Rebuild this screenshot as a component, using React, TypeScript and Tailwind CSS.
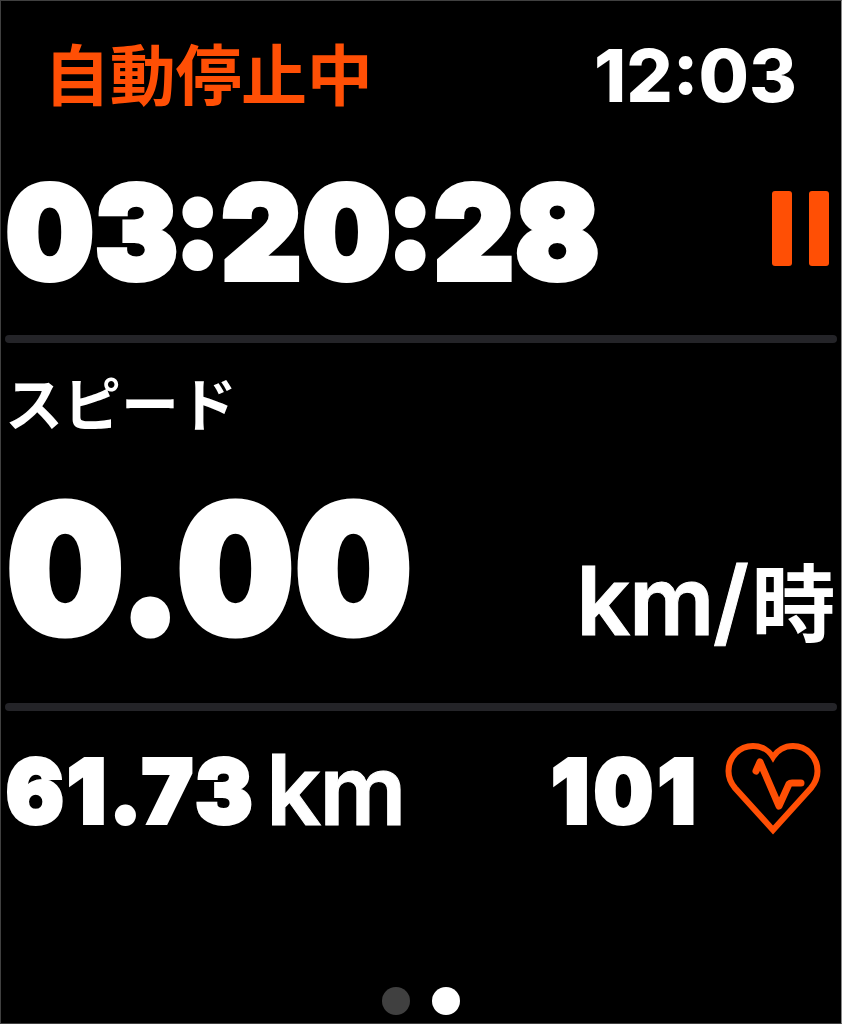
function StatusBar() {
  return (
    <div className="flex h-[149px] items-center justify-between pr-[44px] pl-[43px]">
      <span className="pt-px text-[66px] leading-none font-bold tracking-[-0.3px] text-[#ff4f05]">自動停止中</span>
      <span className="text-[73px] leading-none font-extrabold">12:03</span>
    </div>
  );
}

function PauseIcon() {
  return (
    <div className="mt-[41px] flex gap-[17px]">
      <div className="h-[75px] w-[20px] rounded-[3px] bg-[#ff4f05]" />
      <div className="h-[75px] w-[20px] rounded-[3px] bg-[#ff4f05]" />
    </div>
  );
}

function Divider() {
  return <div className="mx-[4px] h-[8px] shrink-0 rounded-full bg-[#242428]" />;
}

function Colon() {
  return <span className="mr-[-1px] ml-[-5px] inline-block -translate-y-[13px]">:</span>;
}

function HeartIcon() {
  return (
    <svg className="mb-[5px] shrink-0" width="96" height="94" viewBox="0 0 96 94" fill="none" stroke="#ff4f05" strokeLinecap="round" strokeLinejoin="round">
      <path d="M48 88 L10 46 C5 40 3.5 35 3.5 29 C3.5 15 14.5 4 28 4 C36.5 4 44 8.5 48 15 C52 8.5 59.5 4 68 4 C81.5 4 92.500 15 92.500 29 C92.500 35 91 40 86 46 Z" strokeWidth="6" strokeLinejoin="miter" />
      <path d="M31 29 L35 20 L54 64 L64 42 Q65 41 67 41 H76" strokeWidth="7" />
    </svg>
  );
}

export default function App() {
  return (
    <div className="flex h-[1024px] w-[842px] flex-col overflow-hidden border border-[#404040] border-r-[#8a8a8a] bg-black font-[Inter,'Noto_Sans_CJK_JP',sans-serif] text-white">
      <StatusBar />
      <div className="flex h-[185px] items-start justify-between pr-[12px] pl-[5px]">
        <span className="mt-[18px] origin-left scale-x-[0.955] text-[129px] leading-none font-black tracking-[1.8px] whitespace-nowrap [-webkit-text-stroke:6px_white]">
          03<Colon />20<Colon />28
        </span>
        <PauseIcon />
      </div>
      <Divider />
      <div className="h-[120px] pl-[4px] text-[58px] leading-[124px] font-bold">スピード</div>
      <div className="flex h-[240px] items-baseline justify-between pr-[7px] pl-[6px]">
        <span className="origin-left scale-x-[0.925] text-[177px] leading-[212px] font-black tracking-[1.8px] [-webkit-text-stroke:7px_white]">0.00</span>
        <span className="translate-y-[2px] text-[95px] leading-none font-semibold tracking-[-1.500px] [-webkit-text-stroke:1px_white]">
          km/<span className="ml-[4px] text-[84px] [-webkit-text-stroke:0px]">時</span>
        </span>
      </div>
      <Divider />
      <div className="flex h-[160px] items-center justify-between pr-[20px] pl-[5px]">
        <div className="-mt-[3px] flex items-baseline">
          <span className="w-[260px] origin-left -translate-y-[2px] scale-x-[0.97] text-[88px] leading-none font-black tracking-[3.800px] [-webkit-text-stroke:4px_white]">61.73</span>
          <span className="text-[97px] leading-none font-semibold tracking-[-2px] [-webkit-text-stroke:1px_white]">km</span>
        </div>
        <div className="flex items-center gap-[24px]">
          <span className="origin-right scale-x-[0.94] text-[88px] leading-none font-black tracking-[5.500px] [-webkit-text-stroke:4px_white]">101</span>
          <HeartIcon />
        </div>
      </div>
      <div className="mt-auto mb-[8px] flex justify-center gap-[22px]">
        <div className="size-[28px] rounded-full bg-[#404040]" />
        <div className="size-[28px] rounded-full bg-white" />
      </div>
    </div>
  );
}
